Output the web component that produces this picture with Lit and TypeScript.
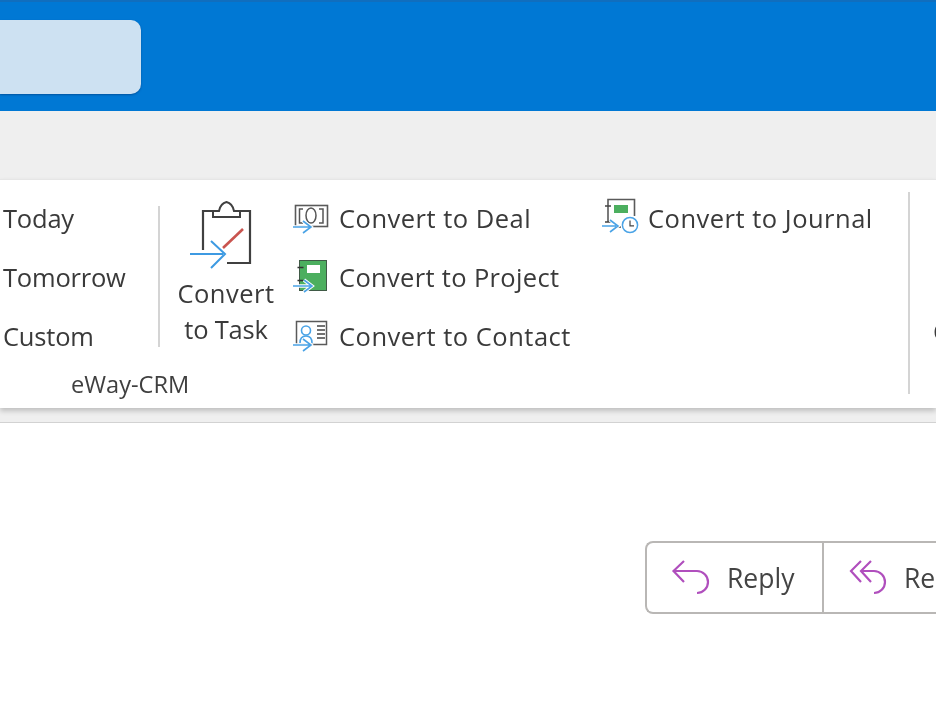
import { LitElement, html, css, svg } from "lit";
import { customElement } from "lit/decorators.js";

const BLUE = "#4aa3e6";
const arrow = (y: number, x2 = 18, cx = 19) => svg`
  <path d="M1 ${y}H${x2}M${cx - 8} ${y - 6}L${cx} ${y}L${cx - 8} ${y + 6}" fill="none" stroke="#fff" stroke-width="3.5"/>
  <path d="M1 ${y}H${x2}M${cx - 8} ${y - 6}L${cx} ${y}L${cx - 8} ${y + 6}" fill="none" stroke="${BLUE}" stroke-width="1.6"/>`;

const taskIcon = html`<svg class="big-icon" viewBox="0 0 64 72" width="64" height="72">
  <path d="M15 51V12H25M52 12H62V64H39" fill="none" stroke="#404040" stroke-width="2.200"/>
  <path d="M25 12V18H52V12H46C45 7 43 4 38.500 3C34 4 32 7 31 12Z" fill="none" stroke="#404040" stroke-width="2"/>
  <path d="M35 49L55 30" stroke="#c9544f" stroke-width="2.600"/>
  <path d="M2 55H35M23 42L37 55L23 69" fill="none" stroke="#fff" stroke-width="4"/>
  <path d="M2 55H35M23 42L37 55L23 69" fill="none" stroke="#3d9ae2" stroke-width="2"/>
</svg>`;

const dealIcon = html`<svg class="icon" viewBox="0 0 38 36" width="38" height="36">
  <rect x="3.500" y="5.500" width="32" height="21" fill="none" stroke="#5a5a5a" stroke-width="1.600"/>
  <path d="M11 9H7.500V23H11M27 9H31V23H27" fill="none" stroke="#555" stroke-width="1.500"/>
  <ellipse cx="19" cy="15.500" rx="5" ry="7.500" fill="none" stroke="#555" stroke-width="1.500"/>
  ${arrow(27)}
</svg>`;

const projectIcon = html`<svg class="icon" viewBox="0 0 38 36" width="38" height="36">
  <rect x="7.500" y="1.500" width="27" height="30" fill="#4caf5f" stroke="#3f5a46"/>
  <rect x="15" y="6" width="13" height="8" fill="#fff"/>
  <path d="M5.500 8.500H11.500M5.500 21.500H11.500" stroke="#333" stroke-width="1.300"/>
  ${arrow(27, 19, 20)}
</svg>`;

const contactIcon = html`<svg class="icon" viewBox="0 0 38 36" width="38" height="36">
  <rect x="4.500" y="3.500" width="30" height="23" fill="none" stroke="#5a5a5a" stroke-width="1.500"/>
  <circle cx="14" cy="12.500" r="4.500" fill="none" stroke="${BLUE}" stroke-width="1.600"/>
  <path d="M8 25C8 20 10 18 14 18C18 18 20 20 20 25" fill="none" stroke="${BLUE}" stroke-width="1.600"/>
  <path d="M25 8H33M25 12H33M25 16H33M25 20H33" stroke="#444" stroke-width="1.300"/>
  ${arrow(27)}
</svg>`;

const journalIcon = html`<svg class="icon wide" viewBox="0 0 40 40" width="40" height="40">
  <path d="M7 26V3.500H33.500V20" fill="none" stroke="#5a5a5a" stroke-width="1.600"/>
  <rect x="13" y="9" width="14" height="8" fill="#4caf5f"/>
  <path d="M4 10H10M4 26H10M16 31H20" stroke="#444" stroke-width="1.300"/>
  ${arrow(30, 15, 17)}
  <circle cx="29" cy="29" r="7.600" fill="#fff" stroke="${BLUE}" stroke-width="1.500"/>
  <path d="M29 24.500V29.800H33" fill="none" stroke="#444" stroke-width="1.200"/>
</svg>`;

const replyIcon = html`<svg class="reply-icon" viewBox="0 0 40 40" width="40" height="40">
  <path d="M14 3L3.500 13L14 24M3.500 13H27A11 11 0 0 1 27 35" fill="none" stroke="#b04fbd" stroke-width="2.200"/>
</svg>`;

const replyAllIcon = html`<svg class="reply-icon" viewBox="0 0 40 40" width="40" height="40">
  <path d="M12 3L2 13L12 24M22 3L12 13L22 24M12 13H25A11 11 0 0 1 25 35" fill="none" stroke="#b04fbd" stroke-width="2.200"/>
</svg>`;

@customElement("app-root")
export class AppRoot extends LitElement {
  static styles = css`
    :host {
      display: block;
      width: 936px;
      height: 702px;
      overflow: hidden;
      background: #fff;
      color: #3a3a3a;
      font-family: "Open Sans", "Noto Sans", sans-serif;
      font-size: 25.500px;
    }
    .titlebar {
      box-sizing: border-box;
      height: 111px;
      padding-top: 18px;
      background: #0078d4;
      border-top: 2px solid #106ebe;
    }
    .search {
      width: 141px;
      height: 74px;
      border-radius: 0 10px 10px 0;
      background: #cde1f2;
      box-shadow: 0 1px 2px rgba(0, 50, 110, 0.5);
    }
    .tabs {
      height: 68px;
      background: #efefef;
    }
    .ribbon {
      display: flex;
      height: 229px;
      box-sizing: border-box;
      background: #fff;
      border-top: 1px solid #e6e6e6;
      box-shadow: 0 3px 5px rgba(0, 0, 0, 0.2);
      position: relative;
      filter: blur(0.3px);
    }
    .group {
      display: flex;
      flex-direction: column;
      width: 908px;
    }
    .commands {
      display: flex;
      padding-top: 8px;
      height: 177px;
    }
    .rows {
      display: grid;
      grid-auto-rows: 59px;
      align-content: start;
    }
    .col-dates {
      width: 155px;
      padding-left: 3px;
      box-sizing: content-box;
      letter-spacing: -0.2px;
    }
    .row {
      display: flex;
      align-items: center;
      white-space: nowrap;
    }
    .convert { letter-spacing: 0.5px; }
    .row.tight { letter-spacing: 0.33px; }
    .line-tight { letter-spacing: -0.2px; }
    .sep-short {
      width: 2px;
      height: 141px;
      margin-top: 18px;
      background: #d4d4d4;
    }
    .big {
      width: 132px;
      display: flex;
      flex-direction: column;
      align-items: center;
      padding-top: 9px;
      line-height: 36px;
      text-align: center;
    }
    .big-icon { display: block; margin: 2px 0 0 -12px; height: 72px; }
    .big-label { margin-top: 4px; }
    .col-a { width: 309px; }
    .col-b { width: 307px; }
    .icon { flex: none; margin-right: 9px; }
    .icon.wide { margin-right: 7px; margin-top: -4px; margin-bottom: 0; }
    .group-label {
      padding-left: 71px;
      padding-top: 4px;
      font-size: 23.600px;
      line-height: 30px;
      color: #3f3f3f;
    }
    .sep-tall {
      flex: none;
      width: 2px;
      height: 202px;
      margin-top: 12px;
      background: #d4d4d4;
    }
    .next {
      flex: none;
      padding: 133px 0 0 23px;
      line-height: 36px;
    }
    .strip {
      height: 14px;
      background: #efefef;
      border-bottom: 1px solid #d2d2d2;
    }
    .actions {
      display: flex;
      padding: 118px 0 0 645px;
      filter: blur(0.3px);
    }
    .btn-group {
      display: flex;
      flex: none;
      height: 73px;
      box-sizing: border-box;
      border: 2px solid #b9b7b5;
      border-right: none;
      border-radius: 8px 0 0 8px;
      color: #444;
      font-size: 26.500px;
    }
    .btn {
      display: flex;
      align-items: center;
      white-space: nowrap;
      padding-left: 23px;
    }
    .btn.reply { width: 152px; border-right: 2px solid #b9b7b5; }
    .btn.all { padding-left: 25px; width: 220px; }
    .reply-icon { flex: none; margin-right: 17px; }
    .btn.all .reply-icon { margin-right: 15px; }
  `;

  render() {
    return html`
      <div class="titlebar"><div class="search"></div></div>
      <div class="tabs"></div>
      <div class="ribbon">
        <div class="group">
          <div class="commands">
            <div class="rows col-dates">
              <div class="row">Today</div>
              <div class="row">Tomorrow</div>
              <div class="row">Custom</div>
            </div>
            <div class="sep-short"></div>
            <div class="big">
              ${taskIcon}
              <div class="big-label convert">Convert<br /><span class="line-tight">to Task</span></div>
            </div>
            <div class="rows col-a convert">
              <div class="row">${dealIcon}Convert to Deal</div>
              <div class="row tight">${projectIcon}Convert to Project</div>
              <div class="row">${contactIcon}Convert to Contact</div>
            </div>
            <div class="rows col-b convert">
              <div class="row">${journalIcon}Convert to Journal</div>
            </div>
          </div>
          <div class="group-label">eWay-CRM</div>
        </div>
        <div class="sep-tall"></div>
        <div class="next">C</div>
      </div>
      <div class="strip"></div>
      <div class="actions">
        <div class="btn-group">
          <div class="btn reply">${replyIcon}Reply</div>
          <div class="btn all">${replyAllIcon}Reply All</div>
        </div>
      </div>
    `;
  }
}
